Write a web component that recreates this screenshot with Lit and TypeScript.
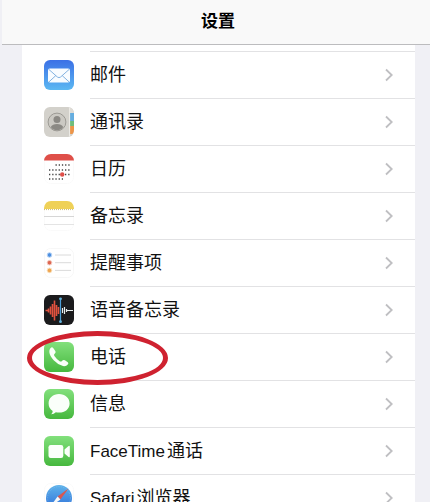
import { LitElement, html, css, svg } from "lit";
import { customElement } from "lit/decorators.js";

const green = svg`
  <defs>
    <linearGradient id="green" x1="0" y1="0" x2="0" y2="1">
      <stop offset="0" stop-color="#82e07c"/>
      <stop offset="1" stop-color="#46b83e"/>
    </linearGradient>
  </defs>
  <rect width="30" height="30" rx="6" fill="url(#green)"/>`;

const icons = {
  mail: svg`
    <defs>
      <linearGradient id="mail" x1="0" y1="0" x2="0" y2="1">
        <stop offset="0" stop-color="#3b70e6"/>
        <stop offset="1" stop-color="#5cb8f2"/>
      </linearGradient>
    </defs>
    <rect width="30" height="30" rx="6" fill="url(#mail)"/>
    <rect x="4" y="8.5" width="22" height="14" rx="1.8" fill="#f8fcff"/>
    <path d="M4.6 9.2 L13.4 17 Q15 18.3 16.6 17 L25.4 9.2 M4.8 22 L11.8 15.6 M25.2 22 L18.2 15.6" fill="none" stroke="#75a9dc" stroke-width=".9"/>`,
  contacts: svg`
    <path d="M6 0 H24 A6 6 0 0 1 30 6 V24 A6 6 0 0 1 24 30 H6 A6 6 0 0 1 0 24 V6 A6 6 0 0 1 6 0Z" fill="#d3d1cb"/>
    <path d="M26 .7 Q30 2.5 30 7 H26Z" fill="#dedbd5"/>
    <path d="M26 6 H30 V15 H26Z" fill="#65addf"/>
    <path d="M26 14 H30 V20 H26Z" fill="#6fbd7c"/>
    <path d="M26 19 H30 V23 Q30 25 28.5 27 L26 27Z" fill="#ed9549"/>
    <path d="M25.6 .6 V29.4" stroke="#efede8" stroke-width="1"/>
    <circle cx="13" cy="15" r="8.9" fill="#cbc9c3" stroke="#96948f" stroke-width=".9"/>
    <circle cx="13" cy="12.5" r="3.5" fill="#8b8984"/>
    <path d="M6.7 20 Q8.5 17 13 17 T19.3 20 Q17 23.3 13 23.3 T6.7 20Z" fill="#8b8984"/>`,
  calendar: svg`
    <rect x=".5" y=".5" width="29" height="29" rx="6" fill="#fff" stroke="#fafafa"/>
    <path d="M0 6.5 Q1 0 7 0 H23 Q29 0 30 6.5Z" fill="#df4f49"/>
    <g stroke="#444" stroke-width="1.3" stroke-dasharray="1.3 1.9">
      <path d="M11.5 11 H26"/><path d="M5 16 H26"/><path d="M5 20.5 H26"/><path d="M5 25 H19"/>
    </g>
    <circle cx="18.2" cy="20.5" r="2.2" fill="#df4f49"/>`,
  notes: svg`
    <rect x=".5" y=".5" width="29" height="29" rx="6" fill="#fff" stroke="#fafafa"/>
    <path d="M0 8 V7 Q1 0 7 0 H23 Q29 0 30 7 V8Z" fill="#efd158"/>
    <path d="M0 8.6 H30" stroke="#cdbb75" stroke-dasharray="1 1"/>
    <path d="M0 15.5 H30" stroke="#ccc" stroke-width=".8"/>
    <path d="M0 23.5 H30" stroke="#ddd" stroke-width=".8"/>`,
  reminders: svg`
    <rect x=".5" y=".5" width="29" height="29" rx="6" fill="#fff" stroke="#f7f7f7"/>
    <g fill="none" stroke-width="1">
      <circle cx="5.5" cy="7" r="2.3" fill="#4c8fe0" stroke="#b9d4f5"/>
      <circle cx="5.5" cy="14.7" r="2.3" fill="#dd6650" stroke="#f5c9c0"/>
      <circle cx="5.5" cy="22.4" r="2.3" fill="#efa650" stroke="#fae0bd"/>
      <path d="M11 7 H27 M11 14.7 H27 M11 22.4 H27" stroke="#d0d0d0" stroke-width=".8"/>
    </g>`,
  memos: svg`
    <rect width="30" height="30" rx="6" fill="#1b1b1d"/>
    <path d="M1.5 15.5 H4 M4.5 13.5 V17.5 M6.5 11.5 V19.5 M8.5 9 V22 M10.5 5.5 V25.5 M12.5 10 V21 M14.5 12 V19" stroke="#e3523f" stroke-width="1.6"/>
    <path d="M18.5 13 V18 M20.5 12 V19 M22.5 14 V17 M23 15.5 H29" stroke="#e9eeee" stroke-width="1.2"/>
    <path d="M16.5 3.5 V27" stroke="#4d9fd8" stroke-width="1.2"/>
    <circle cx="16.5" cy="3.8" r="1.4" fill="#63b4df"/>
    <circle cx="16.5" cy="26.7" r="1.4" fill="#63b4df"/>`,
  phone: svg`${green}
    <path d="M6.2 6.4 Q7.5 4.900 8.600 5.4 Q9.6 6 11.400 9.2 Q12 10.4 11.1 11.300 L10.200 12.200 Q9.8 12.800 10.4 13.900 Q12.6 17.200 16 19.400 Q17 19.900 17.700 19.200 L18.800 18.300 Q19.800 17.600 20.900 18.300 L23.800 20.200 Q24.800 21 24 22.200 Q22 24.800 19 24.100 Q14 22.900 9.700 18.300 Q5.700 14 5.300 10.100 Q5.200 7.800 6.2 6.4Z" fill="#f9fff8"/>`,
  messages: svg`${green}
    <path d="M15 5 C21 5 25.6 8.900 25.600 14.400 S21 23.600 15 23.600 Q13.400 23.600 11.800 23.300 Q9.900 25.100 7.200 25.200 Q8.700 23.600 8.700 21.900 Q4.600 19 4.600 14.400 C4.600 8.900 9 5 15 5Z" fill="#fafffa"/>`,
  facetime: svg`${green}
    <rect x="4.5" y="9" width="14.8" height="13" rx="2.2" fill="#fbfffa"/>
    <path d="M20.5 13.5 L24.6 10 Q25.800 9.300 25.800 10.800 V20.200 Q25.800 21.700 24.600 21 L20.500 17.500Z" fill="#fbfffa"/>`,
  safari: svg`
    <defs>
      <linearGradient id="safari" x1="0" y1="0" x2="0" y2="1">
        <stop offset="0" stop-color="#5fb3ea"/>
        <stop offset="1" stop-color="#2c6cd8"/>
      </linearGradient>
    </defs>
    <rect x=".5" y=".5" width="29" height="29" rx="6" fill="#fff" stroke="#fafafa"/>
    <circle cx="15" cy="15" r="13" fill="url(#safari)"/>
    <circle cx="15" cy="15" r="11.400" fill="none" stroke="#8fc5ef" stroke-width=".8" stroke-dasharray=".5 1.300"/>
    <path d="M24.500 5.500 L13.600 13.600 L16.400 16.400Z" fill="#d9574f"/>
    <path d="M5.500 24.500 L13.600 13.600 L16.400 16.400Z" fill="#f4f7fa"/>`,
};

type Row = { icon: keyof typeof icons; latin?: string; label: string; marked?: boolean };

const rows: Row[] = [
  { icon: "mail", label: "邮件" },
  { icon: "contacts", label: "通讯录" },
  { icon: "calendar", label: "日历" },
  { icon: "notes", label: "备忘录" },
  { icon: "reminders", label: "提醒事项" },
  { icon: "memos", label: "语音备忘录" },
  { icon: "phone", label: "电话", marked: true },
  { icon: "messages", label: "信息" },
  { icon: "facetime", latin: "FaceTime", label: "通话" },
  { icon: "safari", latin: "Safari", label: "浏览器" },
];

@customElement("app-root")
export class AppRoot extends LitElement {
  static styles = css`
    :host {
      display: flex;
      flex-direction: column;
      height: 100vh;
      overflow: hidden;
      background: #f0f0f5;
      color: #111;
      font-family: "Liberation Sans", "Noto Sans CJK SC", sans-serif;
      font-size: 18px;
      line-height: 24px;
    }
    header {
      flex: none;
      display: flex;
      align-items: center;
      justify-content: center;
      height: 44px;
      margin-left: 2px;
      padding-left: 4px;
      background: #f9f9f9;
      border-bottom: 1px solid #bcbcbe;
    }
    h1 {
      margin: 0;
      font-size: 17px;
      font-weight: 700;
      color: #000;
    }
    ul {
      margin: 0 15px 0 22px;
      padding: 6px 0 0;
      list-style: none;
      background: #fff;
    }
    .row {
      position: relative;
      display: flex;
      align-items: stretch;
      gap: 16px;
      height: 47px;
      padding-left: 22px;
      color: inherit;
      text-decoration: none;
    }
    .icon {
      flex: none;
      align-self: center;
      width: 30px;
      height: 30px;
    }
    .body {
      flex: 1;
      display: flex;
      align-items: center;
      justify-content: space-between;
      padding-right: 22px;
      border-top: 1px solid #e2e2e4;
    }
    .label {
      display: flex;
      align-items: baseline;
      gap: 2px;
    }
    .latin {
      font-size: 17px;
    }
    .chevron {
      width: 8px;
      height: 14px;
    }
    .mark {
      position: absolute;
      z-index: 1;
      left: 5px;
      top: -2px;
      box-sizing: border-box;
      width: 141px;
      height: 54px;
      border: 5px solid #cf2230;
      border-radius: 50%;
      pointer-events: none;
    }
  `;

  render() {
    return html`
      <header><h1>设置</h1></header>
      <ul>
        ${rows.map(
          (row) => html`<li>
            <a class="row" href="#${row.icon}">
              <svg class="icon" viewBox="0 0 30 30" aria-hidden="true">${icons[row.icon]}</svg>
              <span class="body">
                <span class="label">
                  ${row.latin ? html`<span class="latin">${row.latin}</span>` : ""}
                  <span>${row.label}</span>
                </span>
                <svg class="chevron" viewBox="0 0 8 14" aria-hidden="true">
                  <path d="M1 1.500 L6.700 7 L1 12.500" fill="none" stroke="#bfbfc2" stroke-width="1.800"/>
                </svg>
              </span>
              ${row.marked ? html`<span class="mark"></span>` : ""}
            </a>
          </li>`
        )}
      </ul>
    `;
  }
}
